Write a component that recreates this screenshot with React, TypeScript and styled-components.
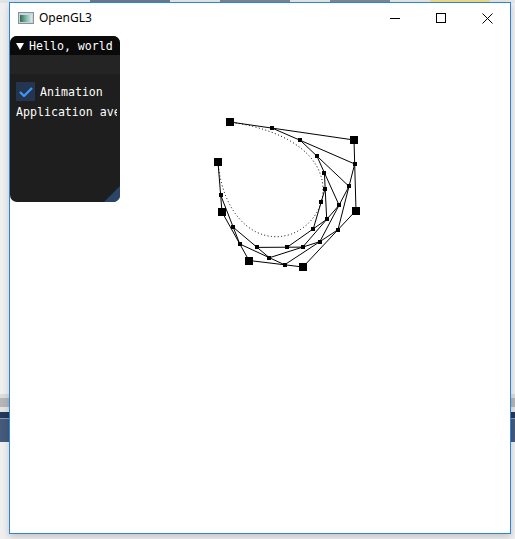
import React, { useMemo } from "react";
import styled, { createGlobalStyle } from "styled-components";

const Global = createGlobalStyle`
  html, body { margin: 0; padding: 0; }
  body {
    width: 515px;
    height: 539px;
    overflow: hidden;
    background: #efefef;
    font-family: "Noto Sans", "Open Sans", sans-serif;
  }
`;

const Desktop = styled.div`
  position: relative;
  width: 515px;
  height: 539px;
  display: flex;
  flex-direction: column;
  background: #efefef;
  overflow: hidden;
`;

const TopStrip = styled.div`
  height: 3px;
  flex-shrink: 0;
  background: linear-gradient(
    to right,
    #dfe4ea 0 90px,
    #6b7a90 90px 170px,
    #e6e6e6 170px 220px,
    #7a8596 220px 290px,
    #e6e6e6 290px 330px,
    #7d8796 330px 390px,
    #e6e6e6 390px 430px,
    #efd98a 430px 490px,
    #e6e6e6 490px
  );
`;

const Band = styled.div<{ $h: number; $c: string }>`
  height: ${(p) => p.$h}px;
  flex-shrink: 0;
  background: ${(p) => p.$c};
`;

const Fill = styled.div`
  flex: 1;
`;

const Window = styled.div`
  position: absolute;
  left: 9px;
  top: 2px;
  width: 500px;
  height: 530px;
  border: 1px solid #2a86d8;
  background: #ffffff;
  display: flex;
  flex-direction: column;
  box-shadow: 0 3px 7px rgba(0, 0, 0, 0.18);
`;

const Caption = styled.div`
  height: 30px;
  flex-shrink: 0;
  display: flex;
  align-items: center;
  background: #ffffff;
`;

const AppIcon = styled.svg`
  margin-left: 8px;
  width: 16px;
  height: 12px;
  flex-shrink: 0;
`;

const Title = styled.span`
  margin-left: 5px;
  font-size: 12px;
  color: #000000;
  line-height: 16px;
`;

const Spacer = styled.div`
  flex: 1;
`;

const CapButton = styled.div`
  width: 46px;
  height: 30px;
  display: flex;
  align-items: center;
  justify-content: center;
`;

const Client = styled.div`
  position: relative;
  width: 500px;
  height: 500px;
  background: #ffffff;
  overflow: hidden;
`;

const Canvas = styled.svg`
  position: absolute;
  left: 0;
  top: 0;
  width: 500px;
  height: 500px;
`;

const Panel = styled.div`
  position: absolute;
  left: 0;
  top: 3px;
  width: 110px;
  height: 166px;
  border-radius: 7px;
  overflow: hidden;
  background: #1e1e1e;
  display: flex;
  flex-direction: column;
  font-family: "DejaVu Sans Mono", "Liberation Mono", monospace;
  font-size: 11.6px;
  color: #ffffff;
`;

const PanelTitle = styled.div`
  height: 19px;
  flex-shrink: 0;
  background: #0a0a0a;
  display: flex;
  align-items: center;
  padding-left: 6px;
  white-space: nowrap;
  overflow: hidden;
`;

const Arrow = styled.svg`
  width: 8px;
  height: 8px;
  flex-shrink: 0;
  margin-right: 5px;
`;

const MenuBar = styled.div`
  height: 19px;
  flex-shrink: 0;
  background: #242424;
`;

const Body = styled.div`
  padding: 8px 3px 0 6px;
  display: flex;
  flex-direction: column;
  gap: 4px;
  overflow: hidden;
`;

const Row = styled.div`
  display: flex;
  align-items: center;
  gap: 5px;
  height: 19px;
  white-space: nowrap;
`;

const Check = styled.div`
  width: 19px;
  height: 19px;
  flex-shrink: 0;
  background: #24364f;
  display: flex;
  align-items: center;
  justify-content: center;
`;

const TextLine = styled.div`
  height: 15px;
  line-height: 15px;
  white-space: nowrap;
  overflow: hidden;
`;

const Grip = styled.div`
  position: absolute;
  right: 0;
  bottom: 0;
  width: 16px;
  height: 16px;
  background: #2b4566;
  clip-path: polygon(100% 0, 100% 100%, 0 100%);
`;

type Pt = [number, number];

const CTRL: Pt[] = (
  [
    [218, 162],
    [222, 212],
    [249, 260.5],
    [303, 267],
    [356, 210.5],
    [354, 140],
    [230, 122],
  ] as Pt[]
).map(([x, y]) => [x - 10, y - 33] as Pt);

const T = 0.66;

function casteljau(pts: Pt[], t: number): Pt[][] {
  const out: Pt[][] = [pts];
  let cur = pts;
  while (cur.length > 1) {
    const nxt: Pt[] = [];
    for (let i = 0; i < cur.length - 1; i++) {
      nxt.push([
        cur[i][0] + (cur[i + 1][0] - cur[i][0]) * t,
        cur[i][1] + (cur[i + 1][1] - cur[i][1]) * t,
      ]);
    }
    out.push(nxt);
    cur = nxt;
  }
  return out;
}

const ptsStr = (p: Pt[]) => p.map(([x, y]) => `${x.toFixed(2)},${y.toFixed(2)}`).join(" ");

function BezierDrawing() {
  const lv = useMemo(() => casteljau(CTRL, T), []);
  const curve = useMemo(() => {
    const s: Pt[] = [];
    for (let i = 0; i <= 240; i++) {
      const l = casteljau(CTRL, i / 240);
      s.push(l[l.length - 1][0]);
    }
    return s;
  }, []);
  return (
    <Canvas viewBox="0 0 500 500">
      <polyline
        points={ptsStr(curve)}
        fill="none"
        stroke="#000"
        strokeWidth={1}
        strokeDasharray="1 2.4"
      />
      {lv.map((level, li) =>
        level.length > 1 ? (
          <polyline
            key={`l${li}`}
            points={ptsStr(level)}
            fill="none"
            stroke="#000"
            strokeWidth={1}
          />
        ) : null
      )}
      {lv.map((level, li) =>
        level.map(([x, y], i) => {
          const s = li === 0 ? 8 : 4;
          return (
            <rect
              key={`p${li}-${i}`}
              x={Math.round(x - s / 2)}
              y={Math.round(y - s / 2)}
              width={s}
              height={s}
              fill="#000"
            />
          );
        })
      )}
    </Canvas>
  );
}

export default function App() {
  return (
    <>
      <Global />
      <Desktop>
        <TopStrip />
        <Band $h={391} $c="#efefef" />
        <Band $h={4} $c="#dcdcdc" />
        <Band $h={9} $c="#b6b6b9" />
        <Band $h={5} $c="#e4e4e4" />
        <Band $h={6} $c="#24385a" />
        <Band $h={1} $c="#8a9ab0" />
        <Band $h={23} $c="#455a7c" />
        <Fill />
        <Window>
          <Caption>
            <AppIcon viewBox="0 0 16 12">
              <defs>
                <linearGradient id="ig" x1="0" y1="0" x2="1" y2="0">
                  <stop offset="0" stopColor="#2f6b4e" />
                  <stop offset="0.5" stopColor="#7fb7a8" />
                  <stop offset="1" stopColor="#dbe9ee" />
                </linearGradient>
              </defs>
              <rect x="0.5" y="0.5" width="15" height="11" fill="#c9d3dc" stroke="#8592a0" />
              <rect x="2" y="3" width="12" height="7" fill="url(#ig)" />
            </AppIcon>
            <Title>OpenGL3</Title>
            <Spacer />
            <CapButton>
              <svg width="10" height="10" viewBox="0 0 10 10">
                <line x1="0" y1="5.5" x2="10" y2="5.5" stroke="#000" strokeWidth="1" />
              </svg>
            </CapButton>
            <CapButton>
              <svg width="10" height="10" viewBox="0 0 10 10">
                <rect x="0.5" y="0.5" width="9" height="9" fill="none" stroke="#000" strokeWidth="1" />
              </svg>
            </CapButton>
            <CapButton>
              <svg width="11" height="11" viewBox="0 0 11 11">
                <path d="M0.5 0.5 L10.5 10.5 M10.5 0.5 L0.5 10.5" stroke="#000" strokeWidth="1" />
              </svg>
            </CapButton>
          </Caption>
          <Client>
            <BezierDrawing />
            <Panel>
              <PanelTitle>
                <Arrow viewBox="0 0 8 8">
                  <polygon points="0,1 8,1 4,8" fill="#ffffff" />
                </Arrow>
                Hello, world
              </PanelTitle>
              <MenuBar />
              <Body>
                <Row>
                  <Check>
                    <svg width="14" height="10" viewBox="0 0 14 10">
                      <polyline
                        points="1,5 5,9 13,1"
                        fill="none"
                        stroke="#4296fa"
                        strokeWidth="2.2"
                      />
                    </svg>
                  </Check>
                  Animation
                </Row>
                <TextLine>Application average 16.667 ms/frame (60.0 FPS)</TextLine>
              </Body>
              <Grip />
            </Panel>
          </Client>
        </Window>
      </Desktop>
    </>
  );
}
